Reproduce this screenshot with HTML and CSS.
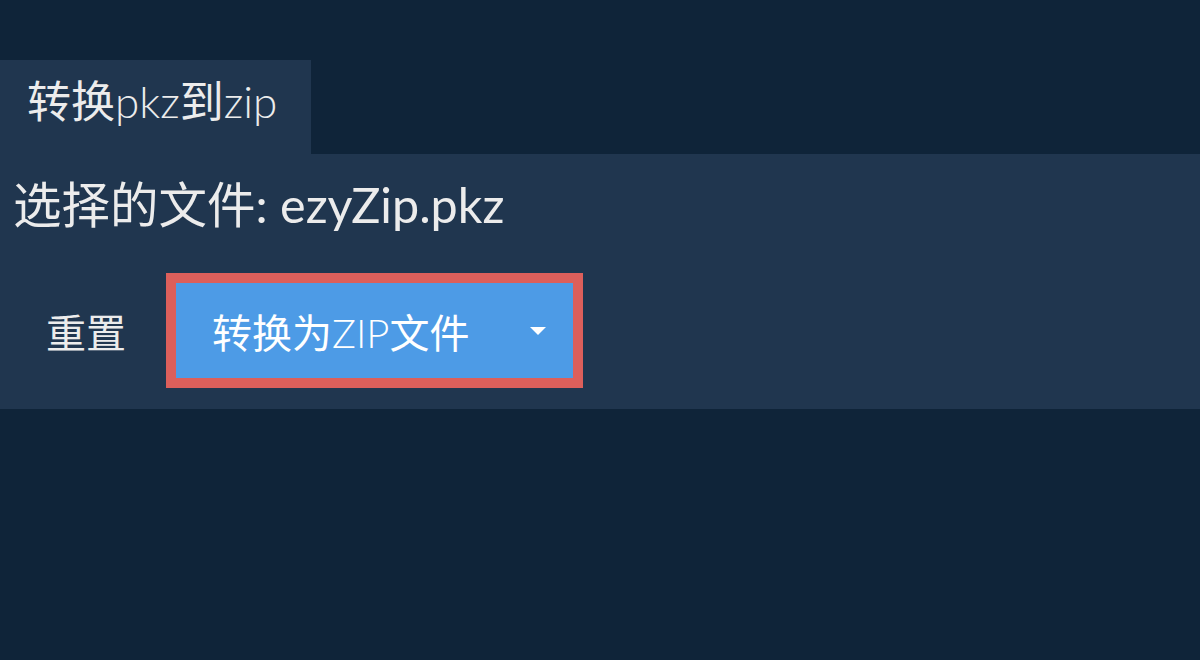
FILE: index.html
```html
<!DOCTYPE html>
<html lang="zh-CN">
<head>
    <meta charset="UTF-8">
    <meta name="viewport" content="width=device-width, initial-scale=1.0">
    <title>转换pkz到zip</title>
    <link rel="stylesheet" href="styles.css">
</head>
<body>
    <div class="tabs">
        <div class="tab">转换<span class="latin">pkz</span>到<span class="latin">zip</span></div>
    </div>

    <div class="panel">
        <h2 class="file-name">选择的文件: ezyZip.pkz</h2>
        <div class="actions">
            <button class="reset-btn">重置</button>
            <button class="convert-btn">
                <span class="convert-label">转换为<span class="latin">ZIP</span>文件</span>
                <span class="caret"></span>
            </button>
        </div>
    </div>
</body>
</html>
```

FILE: styles.css
```css
* {
    margin: 0;
    padding: 0;
    box-sizing: border-box;
}

body {
    font-family: Lato, "Noto Sans CJK SC", sans-serif;
    background: #0f2439;
    color: #ececec;
    min-height: 100vh;
}

.latin {
    font-weight: 300;
}

.tabs {
    display: flex;
    padding-top: 60px;
}

.tab {
    background: #20364f;
    width: 311px;
    height: 94px;
    padding-left: 27px;
    font-size: 44px;
    font-weight: 400;
    line-height: 82px;
}

.panel {
    background: #20364f;
    height: 255px;
    padding: 20px 13px 0;
}

.file-name {
    font-size: 48.5px;
    font-weight: 400;
    line-height: 60px;
}

.actions {
    display: flex;
    align-items: center;
    margin-top: 49px;
    margin-left: 3px;
}

.reset-btn {
    background: none;
    border: none;
    color: #ececec;
    font-family: inherit;
    font-size: 40px;
    padding: 0 30px;
    height: 95px;
    cursor: pointer;
}

.convert-btn {
    display: flex;
    align-items: center;
    justify-content: space-between;
    width: 397px;
    height: 95px;
    margin-left: 20px;
    padding: 0 27px 0 36px;
    background: #4d9be6;
    color: #fff;
    border: none;
    outline: 10px solid #dc5f5b;
    font-family: inherit;
    font-size: 40px;
    cursor: pointer;
}

.caret {
    width: 0;
    height: 0;
    border-left: 8px solid transparent;
    border-right: 8px solid transparent;
    border-top: 8px solid #fff;
}
```
